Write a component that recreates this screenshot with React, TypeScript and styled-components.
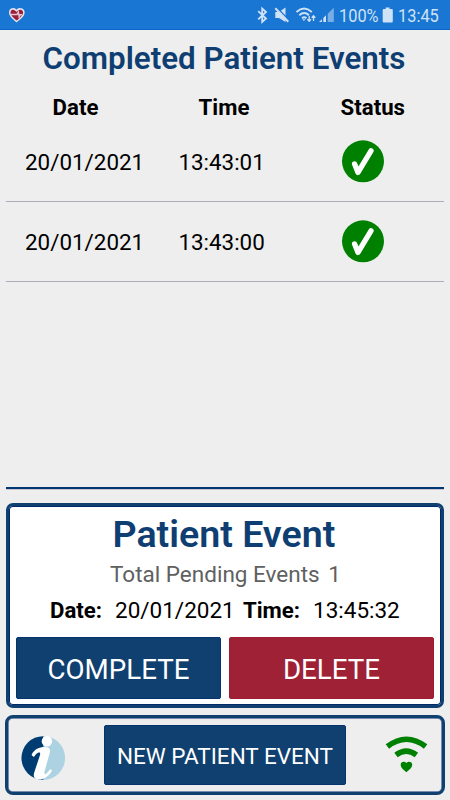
import React from "react";
import styled, { createGlobalStyle } from "styled-components";

const NAVY = "#10406f";
const EDGE = "#00296b";

const GlobalStyle = createGlobalStyle`
  * { box-sizing: border-box; }
  body { margin: 0; background: #eeeeee; font-family: Roboto, "Liberation Sans", sans-serif; color: #000; }
`;

const Screen = styled.div`
  width: 450px;
  height: 800px;
  overflow: hidden;
  display: flex;
  flex-direction: column;
  white-space: nowrap;
`;

const StatusBar = styled.header`
  height: 30px;
  flex: none;
  display: flex;
  justify-content: space-between;
  background: #1976d2;
  border-bottom: 1px solid #0d66c9;
  svg { display: block; flex: none; }
`;

const StatusGroup = styled.div`
  display: flex;
`;

const StatusText = styled.span<{ $width: number }>`
  width: ${(p) => p.$width}px;
  font-size: 18px;
  line-height: 31px;
  color: #cfe2f6;
  transform: scaleX(0.91);
  transform-origin: left;
`;

const Events = styled.section`
  height: 459px;
  flex: none;
  margin: 0 6px;
  border-bottom: 2px solid #003672;
  box-shadow: 0 1px 0 #c9c4cf;
`;

const Title = styled.h1`
  margin: 0;
  height: 57px;
  padding-left: 36.6px;
  font-size: 31.35px;
  line-height: 58px;
  font-weight: 600;
  color: #0e3e72;
`;

const HeadRow = styled.div`
  display: grid;
  grid-template-columns: 146px 142px 1fr;
  height: 35px;
  padding-left: 46.6px;
  font-size: 22.2px;
  font-weight: 700;
  line-height: 41px;
`;

const EventRow = styled.div`
  display: grid;
  grid-template-columns: 153.4px 162.6px 1fr;
  align-items: center;
  height: 80px;
  padding-left: 19px;
  border-bottom: 1px solid #adadba;
  font-size: 22.4px;
  svg { display: block; }
`;

const Card = styled.section`
  height: 205px;
  flex: none;
  margin: 14px 6px 0;
  padding: 1px 8px 0;
  border: 3px solid ${NAVY};
  border-radius: 7px;
  background: #fff;
  box-shadow: inset 0 0 0 1px ${EDGE};
`;

const CardTitle = styled.h2`
  margin: 0;
  height: 54px;
  padding-left: 95.5px;
  font-size: 37.6px;
  font-weight: 600;
  line-height: 55px;
  color: #0e3e72;
`;

const Pending = styled.div`
  display: flex;
  gap: 8.5px;
  height: 25px;
  padding-left: 93px;
  font-size: 22.5px;
  line-height: 26px;
  color: #606060;
`;

const Details = styled.div`
  display: grid;
  grid-template-columns: 65px 128px 70px 1fr;
  height: 51px;
  padding-left: 33px;
  font-size: 22.5px;
  line-height: 49px;
  b { font-size: 22.2px; }
`;

const Actions = styled.div`
  display: flex;
  gap: 8px;
  margin-left: -1px;
`;

const Button = styled.button<{ $tone?: "danger"; $size: "wide" | "compact" }>`
  display: flex;
  flex: none;
  align-items: center;
  justify-content: center;
  width: ${(p) => (p.$size === "wide" ? 205 : 242)}px;
  height: ${(p) => (p.$size === "wide" ? 62 : 60)}px;
  padding: 2px 0 0;
  border: 1px solid ${(p) => (p.$tone ? "#a01a30" : "#06336e")};
  border-radius: 2px;
  background: ${(p) => (p.$tone ? "#9e2136" : NAVY)};
  color: #fff;
  font: 400 ${(p) => (p.$size === "wide" ? 27.7 : 22.5)}px Roboto, "Liberation Sans", sans-serif;
`;

const Footer = styled.footer`
  display: grid;
  grid-template-columns: 84px 242px 1fr;
  align-items: center;
  height: 80px;
  flex: none;
  margin: 7px 5px 0;
  padding: 0 13px 0 12px;
  border: 3px solid ${NAVY};
  border-radius: 8px;
  box-shadow: inset 0 0 0 0.5px ${EDGE};
  svg { display: block; }
  svg:last-child { justify-self: end; }
`;

const HeartLogo = () => (
  <svg width="30" height="29" viewBox="0 0 30 29">
    <path d="M16.5 21.5C11.5 17.5 9.7 15.5 9.7 12.5C9.7 8.7 14 7.6 16.5 10.7C19 7.6 23.9 8.7 23.9 12.5C23.9 15.5 21.5 18 16.5 21.5Z" fill="#9c1e38" stroke="#e5e4ef" strokeWidth="1.5" />
    <path d="M10.5 14.5H17L18.3 12L19.2 17L20 14.8H22" fill="none" stroke="#e3c8d2" strokeWidth="1.4" />
  </svg>
);

const StatusIcons = () => (
  <svg width="98" height="29" viewBox="241 0 98 29" fill="none" stroke="#cfe2f6">
    <path d="M258.2 11.2L266 18.5L262.2 22V8.5L266 12L258.2 19.3" strokeWidth="1.8" />
    <path d="M275.3 12H279L285.5 7.5V22L279 18H275.3Z" fill="#cfe2f6" stroke="none" />
    <path d="M276.5 7.2L289.5 20.7" stroke="#1976d2" strokeWidth="1.6" />
    <path d="M275.3 8.3L288.3 21.8" strokeWidth="2" />
    <path d="M296.5 12Q304 5.2 311.8 12M299.3 15.2Q304.2 10.8 309 15.2M302 18.2Q304.2 16.2 306.4 18.2" strokeWidth="1.9" />
    <path d="M302.3 19.2H305.5L303.9 21Z" fill="#cfe2f6" stroke="none" />
    <path d="M309.2 16V21M307.4 19.2L309.2 21.2L311 19.2M313.5 21V16M311.7 17.8L313.5 15.8L315.3 17.8" strokeWidth="1.3" />
    <path d="M319 22L326 15.2V22Z" fill="#cfe2f6" stroke="none" />
    <path d="M322.6 16V22.3" stroke="#1976d2" strokeWidth="1.4" />
    <path d="M327.4 14L333.8 7.8V22H327.4Z" fill="#78aee5" stroke="none" />
    <path d="M326.8 13V22.3" stroke="#1976d2" strokeWidth="1.4" />
  </svg>
);

const Battery = () => (
  <svg width="17" height="29" viewBox="0 0 17 29">
    <path d="M4.7 7.5H8.5V9H10.5C11.3 9 11.8 9.5 11.8 10.3V21C11.8 22 11.3 22.5 10.5 22.5H3C2.2 22.5 1.7 22 1.7 21V10.3C1.7 9.5 2.2 9 3 9H4.7Z" fill="#cfe2f6" />
  </svg>
);

const Check = () => (
  <svg width="44" height="44" viewBox="0 0 44 44">
    <circle cx="22" cy="21.3" r="21" fill="#008000" />
    <path d="M13.6 24L17 32.4L30 10.8" fill="none" stroke="#fff" strokeWidth="5.3" strokeLinecap="round" strokeLinejoin="round" />
  </svg>
);

const Info = () => (
  <svg width="46" height="52" viewBox="20 729 46 52">
    <circle cx="43.3" cy="758" r="21.8" fill="#add3e3" />
    <path d="M43.3 736.2A21.8 21.8 0 0 0 43.3 779.8Z" fill="#003b71" />
    <circle cx="46.9" cy="741.3" r="5.2" fill="#fff" />
    <path d="M31.5 754.9C34.5 749 39 747 44.8 747C49.5 747 50.7 749.2 49.7 753L44.5 771.5C43.8 774.5 45.3 775.2 47.3 772.8L50.2 769.2L52.1 770.2C49.2 776.2 43.8 779.6 38.7 779.6C34.2 779.5 32.8 776.7 34.3 772.3L40 755C40.9 751.9 38.4 751.7 36 754.3L33.8 756.9Z" fill="#fff" />
  </svg>
);

const HeartWifi = () => (
  <svg width="44" height="40" viewBox="385 735 44 40">
    <path d="M387.4 746.5Q406.5 732 425.6 746.5M396 755Q406.2 747.2 416.4 755" fill="none" stroke="#008000" strokeWidth="5.6" />
    <path d="M406.4 772.3C402.3 769 400.7 767.1 400.7 764.8C400.7 761.5 404.4 760.7 406.4 763C408.4 760.7 412.2 761.5 412.2 764.8C412.2 767.1 410.5 769 406.4 772.3Z" fill="#008000" />
  </svg>
);

const events = [
  { date: "20/01/2021", time: "13:43:01" },
  { date: "20/01/2021", time: "13:43:00" },
];

export default function App() {
  return (
    <Screen>
      <GlobalStyle />
      <StatusBar>
        <HeartLogo />
        <StatusGroup>
          <StatusIcons />
          <StatusText $width={42}>100%</StatusText>
          <Battery />
          <StatusText $width={52}>13:45</StatusText>
        </StatusGroup>
      </StatusBar>
      <Events>
        <Title>Completed Patient Events</Title>
        <HeadRow>
          <span>Date</span>
          <span>Time</span>
          <span>Status</span>
        </HeadRow>
        {events.map((e) => (
          <EventRow key={e.time}>
            <span>{e.date}</span>
            <span>{e.time}</span>
            <Check />
          </EventRow>
        ))}
      </Events>
      <Card>
        <CardTitle>Patient Event</CardTitle>
        <Pending>
          <span>Total Pending Events</span>
          <span>1</span>
        </Pending>
        <Details>
          <b>Date:</b>
          <span>20/01/2021</span>
          <b>Time:</b>
          <span>13:45:32</span>
        </Details>
        <Actions>
          <Button $size="wide">COMPLETE</Button>
          <Button $size="wide" $tone="danger">DELETE</Button>
        </Actions>
      </Card>
      <Footer>
        <Info />
        <Button $size="compact">NEW PATIENT EVENT</Button>
        <HeartWifi />
      </Footer>
    </Screen>
  );
}
